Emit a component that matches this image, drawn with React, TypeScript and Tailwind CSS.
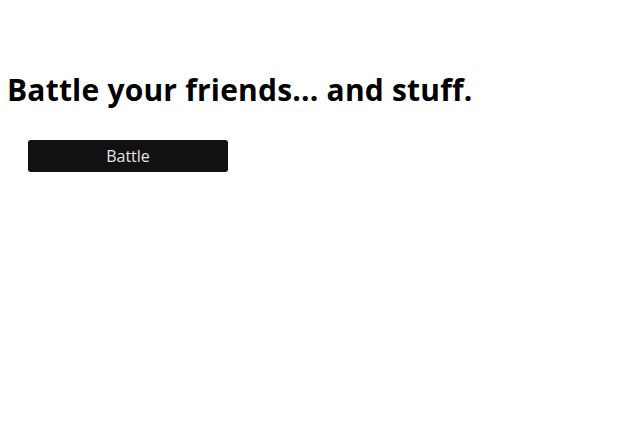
export default function App() {
  return (
    <div className="min-h-[426px] bg-white pt-[68px] font-['Open_Sans',sans-serif] text-black">
      <h1 className="pl-[7px] text-[30px] font-bold leading-[44px] tracking-[0.2px]">
        Battle your friends... and stuff.
      </h1>
      <div className="mt-[28px] pl-7">
        <button className="h-8 w-[200px] rounded-[3px] bg-[#111111] text-base text-[#e5e5e5]">
          Battle
        </button>
      </div>
    </div>
  );
}
